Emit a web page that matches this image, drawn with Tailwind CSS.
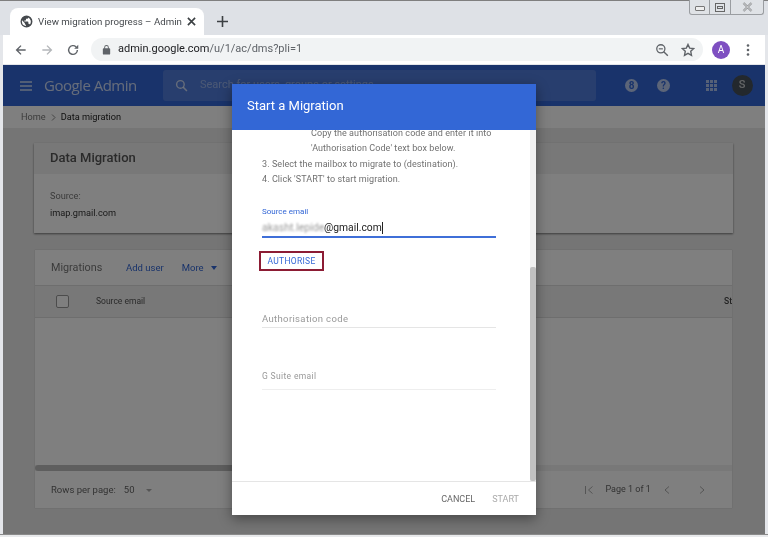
<!DOCTYPE html>
<html lang="en">
<head>
<meta charset="UTF-8">
<title>View migration progress</title>
<script src="https://cdn.jsdelivr.net/npm/@tailwindcss/browser@4"></script>
</head>
<body class="m-0 overflow-hidden bg-white">
<div class="relative w-[768px] h-[537px] overflow-hidden bg-[#e4e6ea] font-['Roboto',sans-serif] blur-[0.4px]">
  <!-- window frame -->
  <div class="absolute inset-x-0 top-0 h-px bg-[#7f7f7f]"></div>

  <!-- tab strip -->
  <div class="h-[35px] pt-2 pl-[10px] flex items-end bg-[#dee1e6]">
    <div class="w-[194px] h-[27px] bg-white rounded-t-lg flex items-center pl-[10px]">
      <svg width="13" height="13" viewBox="0 0 24 24" class="shrink-0"><path fill="#45494d" d="M12 1a11 11 0 1 0 0 22 11 11 0 0 0 0-22zM3.500 12c0-.8.1-1.500.3-2.200L9 15v1c0 1.100.9 2 2 2v2.400A8.500 8.500 0 0 1 3.500 12zm14.800 5.400c-.3-.8-1-1.400-1.900-1.400h-1v-3c0-.6-.4-1-1-1H8v-2h2c.6 0 1-.4 1-1V7h2c1.100 0 2-.9 2-2v-.4a8.500 8.500 0 0 1 3.300 12.800z"/></svg>
      <span class="ml-[5px] mt-px w-[144px] shrink-0 text-[9.700px] text-[#45494d] whitespace-nowrap">View migration progress – Admin</span>
      <svg width="9" height="9" viewBox="0 0 10 10" class="ml-[5px] shrink-0"><path d="M1 1l8 8M9 1l-8 8" stroke="#3c4043" stroke-width="1.800"/></svg>
    </div>
    <svg width="11" height="11" viewBox="0 0 11 11" class="ml-[13px] mb-[8px]"><path d="M5.500 0v11M0 5.500h11" stroke="#3c4043" stroke-width="1.600"/></svg>
  </div>

  <!-- window buttons -->
  <div class="absolute top-0 left-[689px] w-[75px] h-[15px] flex border border-t-0 border-[#9a9da1] rounded-b-[3px] bg-[#dfe2e6]">
    <div class="w-[20px] flex items-center justify-center border-r border-[#9a9da1]"><div class="w-[10px] h-[5px] border border-[#777] rounded-[1px] bg-[#eee] mt-[2px]"></div></div>
    <div class="w-[21px] flex items-center justify-center border-r border-[#9a9da1]"><div class="w-[10px] h-[9px] border border-[#666] flex items-center justify-center"><div class="w-[6px] h-[3px] border border-[#666]"></div></div></div>
    <div class="flex-1 flex items-center justify-center"><svg width="11" height="10" viewBox="0 0 11 10"><path d="M1.500 1l8 8M9.500 1l-8 8" stroke="#8a8d90" stroke-width="2.200"/><path d="M1.500 1l8 8M9.500 1l-8 8" stroke="#eee" stroke-width="0.800"/></svg></div>
  </div>

  <!-- toolbar -->
  <div class="h-[29px] ml-[3px] mr-[3px] bg-white flex items-center">
    <svg width="14" height="14" viewBox="0 0 24 24" class="ml-[11px]"><path d="M20 12H5M12 4.500L4.500 12l7.500 7.500" fill="none" stroke="#5f6368" stroke-width="2.400"/></svg>
    <svg width="14" height="14" viewBox="0 0 24 24" class="ml-[12px]"><path d="M4 12h15M12 4.500l7.500 7.500-7.500 7.500" fill="none" stroke="#b4b7ba" stroke-width="2.400"/></svg>
    <svg width="14" height="14" viewBox="0 0 24 24" class="ml-[12px]"><path d="M19.500 12a7.500 7.500 0 1 1-2.200-5.300" fill="none" stroke="#5f6368" stroke-width="2.400"/><path d="M21 3v7h-7z" fill="#5f6368"/></svg>
    <div class="ml-[11px] w-[612px] h-[23px] bg-[#f1f3f4] rounded-full flex items-center pl-[10px]">
      <svg width="11" height="12" viewBox="0 0 24 24"><path fill="#5f6368" d="M18 8h-1V6A5 5 0 0 0 7 6v2H6a2 2 0 0 0-2 2v10c0 1.100.9 2 2 2h12a2 2 0 0 0 2-2V10a2 2 0 0 0-2-2zM9 6a3 3 0 0 1 6 0v2H9z"/></svg>
      <span class="ml-[6px] text-[11px] text-[#202124] whitespace-nowrap">admin.google.com<span class="text-[#5f6368]">/u/1/ac/dms?pli=1</span></span>
      <svg width="14" height="14" viewBox="0 0 24 24" class="ml-auto"><circle cx="10" cy="10" r="7" fill="none" stroke="#5f6368" stroke-width="2.200"/><path d="M15 15l7 7" stroke="#5f6368" stroke-width="2.400"/><path d="M6.500 10h7" stroke="#5f6368" stroke-width="2"/></svg>
      <svg width="14" height="14" viewBox="0 0 24 24" class="ml-[12px] mr-[8px]"><path d="M12 2.500l2.900 6.300 6.800.8-5 4.700 1.300 6.800-6-3.400-6 3.400 1.300-6.800-5-4.700 6.800-.8z" fill="none" stroke="#5f6368" stroke-width="2.400"/></svg>
    </div>
    <div class="ml-[9px] w-[18px] h-[18px] rounded-full bg-[#7e4fc1] text-white text-[10px] flex items-center justify-center">A</div>
    <svg width="4" height="12" viewBox="0 0 4 12" class="ml-[16px]"><circle cx="2" cy="1.500" r="1.300" fill="#5f6368"/><circle cx="2" cy="6" r="1.300" fill="#5f6368"/><circle cx="2" cy="10.500" r="1.300" fill="#5f6368"/></svg>
  </div>

  <!-- page under the dialog -->
  <div class="relative mx-[3px] h-[471px] mt-px bg-[#ebebeb]">
    <header class="h-[41px] bg-[#3367d6] flex items-center">
      <svg width="12" height="10" viewBox="0 0 12 10" class="ml-[17px]"><path d="M0 1h12M0 5h12M0 9h12" stroke="#fff" stroke-opacity=".75" stroke-width="1.300"/></svg>
      <span class="ml-[12px] w-[92px] whitespace-nowrap text-[15px] text-white/75 font-['Open_Sans',sans-serif] tracking-[-0.5px]">Google Admin</span>
      <div class="ml-[27px] w-[433px] h-[31px] bg-white/15 rounded-[3px] flex items-center pl-[12px]">
        <svg width="13" height="13" viewBox="0 0 24 24"><circle cx="10" cy="10" r="7" fill="none" stroke="#fff" stroke-opacity=".7" stroke-width="2.600"/><path d="M15 15l7 7" stroke="#fff" stroke-opacity=".7" stroke-width="2.800"/></svg>
        <span class="ml-[12px] text-[11px] text-white/40">Search for users, groups or settings</span>
      </div>
      <div class="ml-[29px] w-[13px] h-[13px] rounded-full bg-white/65 text-[#3367d6] text-[10px] font-bold flex items-center justify-center">8</div>
      <div class="ml-[19px] w-[13px] h-[13px] rounded-full bg-white/65 text-[#3367d6] text-[10px] font-bold flex items-center justify-center">?</div>
      <div class="ml-[36px] grid grid-cols-3 gap-[1.500px]">
        <i class="block w-[2.500px] h-[2.500px] bg-white/60"></i><i class="block w-[2.500px] h-[2.500px] bg-white/60"></i><i class="block w-[2.500px] h-[2.500px] bg-white/60"></i>
        <i class="block w-[2.500px] h-[2.500px] bg-white/60"></i><i class="block w-[2.500px] h-[2.500px] bg-white/60"></i><i class="block w-[2.500px] h-[2.500px] bg-white/60"></i>
        <i class="block w-[2.500px] h-[2.500px] bg-white/60"></i><i class="block w-[2.500px] h-[2.500px] bg-white/60"></i><i class="block w-[2.500px] h-[2.500px] bg-white/60"></i>
      </div>
      <div class="ml-[15px] w-[21px] h-[21px] rounded-full bg-[#46505a] text-white/70 text-[11px] font-medium flex items-center justify-center">S</div>
    </header>

    <div class="h-[22px] bg-white flex items-center pl-[18px] text-[9.200px]">
      <span class="text-[#777]">Home</span>
      <svg width="5" height="7" viewBox="0 0 5 7" class="mx-[5px]"><path d="M1 .5l3 3-3 3" fill="none" stroke="#888"/></svg>
      <span class="text-[#222]">Data migration</span>
    </div>

    <!-- source card -->
    <section class="ml-[31px] mt-[15px] w-[699px] h-[90px] bg-white shadow-[0_1px_2px_rgba(0,0,0,0.5)]">
      <div class="h-[31px] pb-[2px] bg-[#f0f0f0] pl-[16px] flex items-center text-[13px] font-medium text-[#555]">Data Migration</div>
      <div class="pl-[16px] pt-[13px] text-[9.200px] leading-[17px]">
        <div class="text-[#777]">Source:</div>
        <div class="text-[#333]">imap.gmail.com</div>
      </div>
    </section>

    <!-- migrations card -->
    <section class="relative ml-[32px] mt-[17px] w-[697px] h-[258px] bg-white shadow-[0_0_1px_rgba(0,0,0,0.25)] flex flex-col">
      <div class="h-[35px] pt-px shrink-0 flex items-center pl-[16px] text-[9.500px]">
        <span class="w-[49px] text-[10.800px] text-[#777] mr-[26px]">Migrations</span>
        <span class="text-[#3367d6] mr-[18px]">Add user</span>
        <span class="text-[#3367d6]">More</span>
        <svg width="6" height="4" viewBox="0 0 6 4" class="ml-[7px]"><path d="M0 0h6L3 4z" fill="#3367d6"/></svg>
      </div>
      <div class="relative h-[33px] shrink-0 bg-[#f0f0f0] border-y border-[#dcdcdc] flex items-center pl-[21px]">
        <div class="w-[13px] h-[13px] border border-[#999] rounded-[2px] bg-white"></div>
        <span class="ml-[27px] text-[8.500px] text-[#555]">Source email</span>
        <span class="absolute right-0 text-[8.500px] font-medium text-[#444]">St</span>
      </div>
      <div class="flex-1"></div>
      <div class="h-[6px] shrink-0 bg-[#f0f0f0]"><div class="w-[500px] h-[6px] bg-[#bdbdbd] rounded-[3px]"></div></div>
      <div class="h-[37px] shrink-0 flex items-center pl-[16px] pt-[1px] text-[9.500px] text-[#666]">
        <span>Rows per page:</span>
        <span class="ml-[8px]">50</span>
        <svg width="6" height="3" viewBox="0 0 6 3" class="ml-[12px]"><path d="M0 0h6L3 3z" fill="#aaa"/></svg>
        <svg width="9" height="8" viewBox="0 0 9 8" class="ml-[433px]"><path d="M.5 0v8M7.500.5L3.500 4l4 3.500" fill="none" stroke="#aaa" stroke-width="1"/></svg>
        <span class="ml-[11px] text-[9px]">Page 1 of 1</span>
        <svg width="6" height="8" viewBox="0 0 6 8" class="ml-[13px]"><path d="M5 .5L1 4l4 3.500" fill="none" stroke="#aaa"/></svg>
        <svg width="6" height="8" viewBox="0 0 6 8" class="ml-[29px]"><path d="M1 .5L5 4 1 7.500" fill="none" stroke="#aaa"/></svg>
      </div>
    </section>

    <!-- dim overlay -->
    <div class="absolute inset-0 bg-black/50"></div>
  </div>
  <div class="absolute left-0 bottom-0 w-full h-[3px] bg-[#e8e9eb] border-t border-[#8a8a8a]"></div>

  <!-- dialog -->
  <div class="absolute left-[232px] top-[84px] w-[304px] h-[431px] bg-white flex flex-col shadow-[0_4px_12px_rgba(0,0,0,0.4)]">
    <div class="h-[46px] shrink-0 bg-[#3367d6] flex items-center pl-[15px] pb-[2px] text-[13px] text-white">Start a Migration</div>
    <div class="relative flex-1 overflow-hidden">
      <div class="absolute right-0 top-0 bottom-0 w-[6px] bg-[#f1f1f1]"><div class="absolute bottom-0 w-full h-[214px] bg-[#c1c1c1] rounded-[2px]"></div></div>
      <div class="pl-[30px] text-[9px] tracking-[0.08px] leading-[15.300px] text-[#707070]">
        <p class="pl-[49px] pb-[4px] leading-[7.300px]">Copy the authorisation code and enter it into</p>
        <p class="pl-[49px]">'Authorisation Code' text box below.</p>
        <p>3. Select the mailbox to migrate to (destination).</p>
        <p>4. Click 'START' to start migration.</p>
      </div>
      <div class="ml-[30px] mt-[19px] w-[234px]">
        <div class="text-[8px] text-[#3367d6]">Source email</div>
        <div class="mt-[2px] h-[18px] flex items-center border-b-2 border-[#3f6fd8] text-[10.300px] text-[#222]">
          <span class="blur-[1.2px] text-[#999] text-[10.500px] w-[62px] overflow-hidden whitespace-nowrap">akasht.lepide</span><span>@gmail.com</span><span class="w-px h-[12px] bg-[#222]"></span>
        </div>
      </div>
      <div class="ml-[27px] mt-[13px] w-[65px] h-[20px] border-2 border-[#8c1c34] flex items-center justify-center text-[8.500px] tracking-[0.3px] text-[#3367d6]">AUTHORISE</div>
      <div class="ml-[30px] mt-[38px] w-[234px] h-[19px] pt-px border-b border-[#e5e5e5] text-[9.500px] tracking-[0.35px] text-[#999] flex items-center">Authorisation code</div>
      <div class="ml-[30px] mt-[37px] w-[234px] h-[25px] pb-[2px] border-b border-[#eeeeee] text-[8.500px] tracking-[0.35px] text-[#999] flex items-center">G Suite email</div>
    </div>
    <div class="h-[34px] shrink-0 border-t border-[#e5e5e5] flex items-center justify-end pr-[17px] pt-[2px] text-[9px]">
      <span class="text-[#666] mr-[17px]">CANCEL</span>
      <span class="text-[#aaa]">START</span>
    </div>
  </div>
</div>
</body>
</html>
